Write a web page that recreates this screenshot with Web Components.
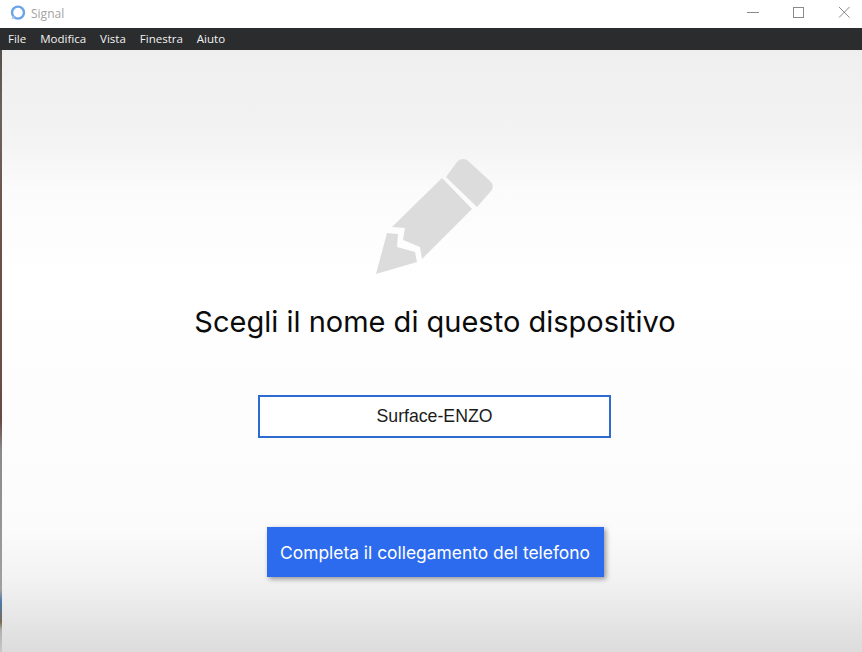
<!DOCTYPE html>
<html lang="it">
<head>
<meta charset="utf-8">
<title>Signal</title>
<style>
    html, body { margin: 0; height: 100%; overflow: hidden; }
    body { background: #fff; }
</style>
</head>
<body>
<app-window>
    <title-bar slot="top">Signal</title-bar>
    <menu-bar slot="top"></menu-bar>
    <device-name-step>
        <span slot="title">Scegli il nome di questo dispositivo</span>
        <span slot="action">Completa il collegamento del telefono</span>
    </device-name-step>
</app-window>

<script>
const windowTemplate = document.createElement('template');
windowTemplate.innerHTML = `
    <style>
        :host {
            display: grid;
            grid-template-columns: 2px 1fr;
            grid-template-rows: auto 1fr;
            width: 862px;
            height: 652px;
            background: #fff;
        }
        .top { grid-column: 1 / 3; display: block; }
        /* sliver of the desktop showing down the left edge */
        .desktop {
            background: linear-gradient(to bottom,
                #55504c 0, #6b625c 60px, #6f5048 200px, #6a4a44 370px,
                #8a8a8a 400px, #a0a0a0 540px, #4a78a8 552px, #7a6a55 572px, #b0b0b0 580px, #c8c8c8 602px);
        }
    </style>
    <div class="top"><slot name="top"></slot></div>
    <div class="desktop"></div>
    <slot></slot>
`;

class AppWindow extends HTMLElement {
    constructor() {
        super();
        this.attachShadow({ mode: 'open' });
        this.shadowRoot.appendChild(windowTemplate.content.cloneNode(true));
    }
}

const titleTemplate = document.createElement('template');
titleTemplate.innerHTML = `
    <style>
        :host {
            display: flex;
            align-items: center;
            height: 28px;
            background: #fff;
            color: #a3a3a3;
            font: 12px "Open Sans", "Noto Sans", sans-serif;
        }
        .logo { width: 16px; height: 16px; margin: -2px 5px 0 10px; display: block; }
        .text { flex: 1; margin-top: -1px; }
        .buttons { display: flex; height: 100%; }
        .buttons svg { width: 45px; height: 24px; display: block; }
    </style>
    <svg class="logo" viewBox="0 0 16 16">
        <circle cx="8" cy="7.6" r="6" fill="none" stroke="#6aa3e8" stroke-width="2.4"/>
        <path d="M2.4 10.6L1.6 14.4 5.4 13.2Z" fill="#a9c8ef"/>
    </svg>
    <div class="text"><slot></slot></div>
    <div class="buttons">
        <svg viewBox="0 0 45 24"><path d="M20 12.5h12" stroke="#8a8a8a" fill="none"/></svg>
        <svg viewBox="0 0 45 24"><rect x="21.5" y="7.5" width="10" height="10" stroke="#8a8a8a" fill="none"/></svg>
        <svg viewBox="0 0 45 24"><path d="M22 7l10.5 10.5M32.5 7L22 17.5" stroke="#8a8a8a" fill="none"/></svg>
    </div>
`;

class TitleBar extends HTMLElement {
    constructor() {
        super();
        this.attachShadow({ mode: 'open' });
        this.shadowRoot.appendChild(titleTemplate.content.cloneNode(true));
    }
}

const menuTemplate = document.createElement('template');
menuTemplate.innerHTML = `
    <style>
        :host {
            display: flex;
            align-items: center;
            gap: 14px;
            box-sizing: border-box;
            height: 22px;
            padding: 0 0 2px 8px;
            background: #2b2c2e;
            color: #f2f2f2;
            font: 11.5px "Open Sans", "Noto Sans", sans-serif;
        }
    </style>
    <span>File</span>
    <span>Modifica</span>
    <span>Vista</span>
    <span>Finestra</span>
    <span>Aiuto</span>
`;

class MenuBar extends HTMLElement {
    constructor() {
        super();
        this.attachShadow({ mode: 'open' });
        this.shadowRoot.appendChild(menuTemplate.content.cloneNode(true));
    }
}

const stepTemplate = document.createElement('template');
stepTemplate.innerHTML = `
    <style>
        :host {
            display: flex;
            flex-direction: column;
            align-items: center;
            min-height: 0;
            padding: 100px 0 0 6px;
            background: linear-gradient(to bottom,
                #efefef 0, #f3f3f3 90px, #fbfbfb 140px, #fff 230px,
                #fbfbfb 480px, #f2f2f2 530px, #dcdcdc 602px);
            font-family: Inter, "Liberation Sans", sans-serif;
        }
        svg { display: block; width: 130px; height: 130px; }
        h1 {
            margin: 25px 0 0;
            font-size: 29px;
            font-weight: 400;
            line-height: 34px;
            color: #0b0b0b;
        }
        input {
            display: block;
            box-sizing: border-box;
            width: 353px;
            height: 43px;
            margin: 56px 1px 0 0;
            padding: 0;
            border: 2px solid #2e6bd0;
            outline: none;
            background: #fff;
            color: #1b1b1b;
            font: 17.7px "Liberation Sans", Arial, sans-serif;
            text-align: center;
        }
        button {
            display: block;
            box-sizing: border-box;
            width: 337px;
            height: 50px;
            margin-top: 89px;
            padding: 0;
            border: 0;
            background: #2c6bed;
            color: #fff;
            font: 17.4px Inter, "Liberation Sans", sans-serif;
            box-shadow: 2px 2px 5px rgba(0, 0, 0, .4);
        }
    </style>
    <svg viewBox="370 150 130 130">
        <path fill="#dcdcdc" d="M446 177L457 162Q461 157 467 160L490 181Q495 186 491 191L477 207Z"/>
        <path fill="#dcdcdc" d="M442 178L472 209L422 259L420 247L403 240L405 228L392 227Z"/>
        <path fill="#dcdcdc" d="M387 233L398 234L397 247L415 252L417 262L376 274Z"/>
    </svg>
    <h1><slot name="title"></slot></h1>
    <input type="text" value="Surface-ENZO">
    <button type="button"><slot name="action"></slot></button>
`;

class DeviceNameStep extends HTMLElement {
    constructor() {
        super();
        this.attachShadow({ mode: 'open' });
        this.shadowRoot.appendChild(stepTemplate.content.cloneNode(true));
    }
}

customElements.define('app-window', AppWindow);
customElements.define('title-bar', TitleBar);
customElements.define('menu-bar', MenuBar);
customElements.define('device-name-step', DeviceNameStep);
</script>
</body>
</html>
